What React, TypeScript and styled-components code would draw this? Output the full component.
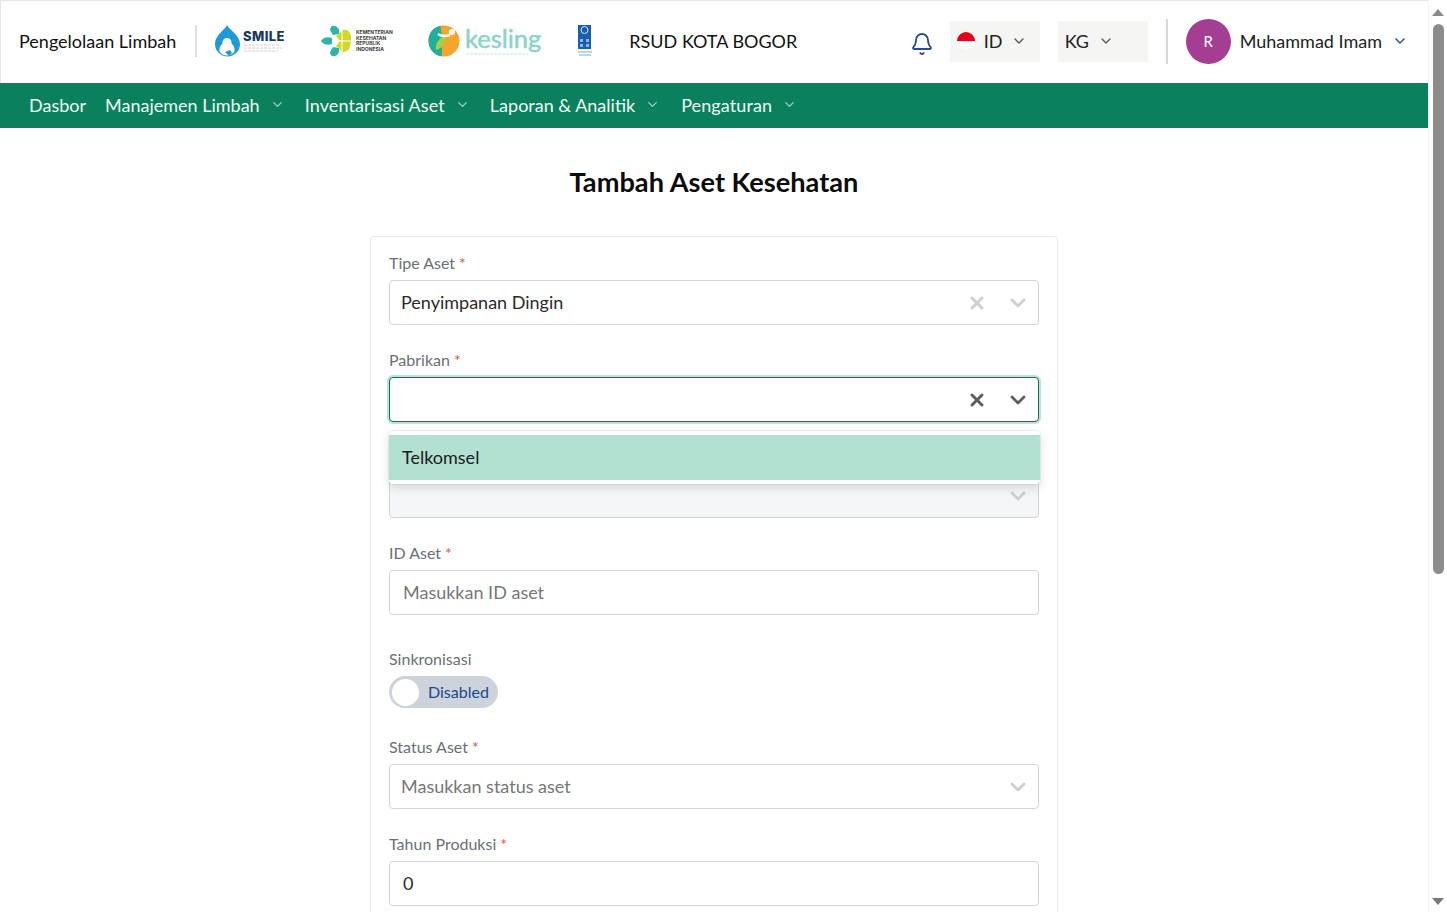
import React from 'react'
import styled, { createGlobalStyle } from 'styled-components'
import { Bell, ChevronDown, X } from 'lucide-react'

const GlobalStyle = createGlobalStyle`
  html, body {
    height: 100%;
    overflow: hidden;
  }
  body {
    margin: 0;
    background: #fff;
    font-family: 'Lato', 'Liberation Sans', sans-serif;
    color: #111;
  }
  * {
    box-sizing: border-box;
  }
`

const Viewport = styled.div`
  display: grid;
  grid-template-columns: 1fr 19px;
  height: 100vh;
`

const PagePane = styled.div`
  min-width: 0;
  overflow: hidden;
`

const ScrollRail = styled.div`
  display: flex;
  flex-direction: column;
  align-items: center;
  padding: 9px 0 7px;
  border-left: 1px solid #f6f6f6;
  background: #fff;
`

const ScrollArrow = styled.span<{ $down?: boolean }>`
  width: 0;
  height: 0;
  margin-top: ${({ $down }) => ($down ? 'auto' : '0')};
  border-left: 6.5px solid transparent;
  border-right: 6.5px solid transparent;
  border-top: ${({ $down }) => ($down ? '7px solid #777' : 'none')};
  border-bottom: ${({ $down }) => ($down ? 'none' : '7px solid #8a8a8a')};
`

const ScrollThumb = styled.span`
  width: 11px;
  height: 550px;
  margin-top: 8px;
  border-radius: 6px;
  background: #8c8c8c;
`

const TopBar = styled.header`
  display: flex;
  align-items: center;
  height: 83px;
  padding: 0 20px 2px 18px;
  border-top: 1px solid #e6e6e6;
  border-left: 1px solid #e6e6e6;
  background: #fff;
`

const AppName = styled.span`
  font-size: 18px;
  white-space: nowrap;
`

const BrandDivider = styled.span`
  width: 2px;
  height: 32px;
  margin: 0 17px 0 19px;
  background: #dedede;
`

const LogoRow = styled.div`
  display: flex;
  align-items: center;
  gap: 35px;
`

const HospitalName = styled.span`
  margin-left: 1px;
  font-size: 18px;
  white-space: nowrap;
`

const TopActions = styled.div`
  display: flex;
  align-items: center;
  margin-left: auto;
`

const BellButton = styled.span`
  display: flex;
  margin: 6px 16px 0 0;
  color: #2c4a8c;
`

const PickerBox = styled.div`
  display: flex;
  align-items: center;
  width: 90px;
  height: 41px;
  margin-right: 18px;
  padding-left: 7px;
  background: #f5f5f3;
  font-size: 18px;
  color: #222;

  svg {
    margin-left: 9px;
  }
`

const FlagDot = styled.span`
  width: 18px;
  height: 18px;
  margin-right: 9px;
  border-radius: 50%;
  background: linear-gradient(#e2001a 50%, #fafafa 50%);
`

const ActionDivider = styled.span`
  width: 2px;
  height: 45px;
  margin-right: 18px;
  background: #d8d8d8;
`

const Avatar = styled.span`
  display: flex;
  align-items: center;
  justify-content: center;
  width: 45px;
  height: 45px;
  margin-right: 9px;
  border-radius: 50%;
  background: #a43e92;
  color: #fff;
  font-size: 15px;
`

const UserName = styled.span`
  margin-right: 10px;
  font-size: 18px;
  color: #222;
  white-space: nowrap;
`

const NavBar = styled.nav`
  display: flex;
  align-items: center;
  height: 45px;
  padding: 0 0 2px 29px;
  background: #0a815c;
`

const NavItem = styled.a<{ $gap?: number; $spread?: number }>`
  display: flex;
  align-items: center;
  margin-right: ${({ $gap }) => $gap ?? 19}px;
  color: #f0fbf7;
  font-size: 18px;
  letter-spacing: ${({ $spread }) => $spread ?? 0}px;
  white-space: nowrap;

  svg {
    margin-left: 10px;
    color: #9ed4c1;
  }
`

const Main = styled.main`
  display: flex;
  flex-direction: column;
  align-items: center;
  padding-top: 36px;
`

const PageTitle = styled.h1`
  margin: 0 0 36px;
  font-size: 27.2px;
  line-height: 36px;
  font-weight: 700;
  color: #0b0b0b;
`

const Card = styled.section`
  width: 688px;
  min-height: 1214px;
  padding: 18px;
  border: 1px solid #e9e9e9;
  border-radius: 4px;
`

const Field = styled.div<{ $gap?: number }>`
  position: relative;
  margin-bottom: ${({ $gap }) => $gap ?? 27}px;
`

const Label = styled.label`
  display: block;
  height: 17px;
  margin-bottom: 8px;
  font-size: 16px;
  line-height: 16px;
  color: #6b7075;
`

const Required = styled.span`
  margin-left: 4px;
  color: #d9534f;
`

const SelectBox = styled.div<{ $focused?: boolean; $disabled?: boolean }>`
  display: flex;
  align-items: center;
  height: 45px;
  padding: 0 8px 0 11px;
  border: 1px solid ${({ $focused }) => ($focused ? '#0f6f55' : '#d4d4d4')};
  border-radius: 4px;
  background: ${({ $disabled }) => ($disabled ? '#f5f6f7' : '#fff')};
  box-shadow: ${({ $focused }) => ($focused ? '0 0 0 2px #b9e6d6' : 'none')};
  font-size: 18px;
`

const SelectValue = styled.span<{ $placeholder?: boolean }>`
  flex: 1;
  padding-bottom: 2px;
  color: ${({ $placeholder }) => ($placeholder ? '#777' : '#2b2b2b')};
`

const IndicatorIcon = styled.span<{ $active?: boolean; $clear?: boolean }>`
  display: flex;
  margin-right: ${({ $clear }) => ($clear ? '19px' : '0')};
  color: ${({ $active }) => ($active ? '#5e5e5e' : '#cfcfcf')};
`

const OptionMenu = styled.div`
  position: absolute;
  top: 79px;
  left: 0;
  right: -1px;
  z-index: 2;
  padding: 4px 0;
  border-radius: 4px;
  background: #fff;
  box-shadow: 0 0 0 1px rgba(0, 0, 0, 0.05), 0 4px 11px rgba(0, 0, 0, 0.13);
`

const Option = styled.div`
  display: flex;
  align-items: center;
  height: 45px;
  padding: 0 0 2px 13px;
  background: #b2e1d1;
  font-size: 18px;
  color: #1c1c1c;
`

const TextInput = styled.div<{ $muted?: boolean }>`
  display: flex;
  align-items: center;
  height: 45px;
  padding: 0 0 2px 13px;
  border: 1px solid #d4d4d4;
  border-radius: 4px;
  font-size: 18px;
  color: ${({ $muted }) => ($muted ? '#777' : '#2b2b2b')};
`

const Toggle = styled.div`
  display: flex;
  align-items: center;
  width: 109px;
  height: 32px;
  padding-left: 3px;
  border-radius: 16px;
  background: #cdd2dc;
`

const ToggleKnob = styled.span`
  width: 27px;
  height: 27px;
  margin-right: 9px;
  border-radius: 50%;
  background: #fff;
`

const ToggleLabel = styled.span`
  padding-bottom: 2px;
  font-size: 16px;
  color: #1b4a86;
`

const SmileLogo = () => (
  <svg width="72" height="32" viewBox="0 0 72 32">
    <path d="M13 0C11 5 1 10 1 19a12.5 12.5 0 0 0 25 0C26 10 15 5 13 0z" fill="#1f9ad6" />
    <path d="M13 13c3 0 5 2.500 4.500 5.500 2.500 2 3.500 5 3 8-2 2.500-4.500 4-7.500 4-3 0-5.500-1.500-7.500-4-.5-3 .5-6 3-8C8 15.500 10 13 13 13z" fill="#fff" />
    <path d="M11 27l5-2 2 3-3 3z" fill="#1f9ad6" />
    <text x="29" y="16" fontFamily="Inter, sans-serif" fontSize="13" fontWeight="800" letterSpacing=".4" fill="#183a5a">SMILE</text>
    <path d="M30 20h36M30 23h38M30 26h34" stroke="#ccd4da" strokeWidth="1" strokeDasharray="3 1" />
  </svg>
)

const KemenkesLogo = () => (
  <svg width="72" height="32" viewBox="0 0 72 32">
    <path d="M11 1c5-1 8 3 7 8l-6 1-3-5c0-2 1-3 2-4z" fill="#2fb5a5" />
    <path d="M11 31c5 1 8-3 7-8l-6-1-3 5c0 2 1 3 2 4z" fill="#2fb5a5" />
    <path d="M0 16c2-3 6-5 11-3v6c-5 2-9 0-11-3z" fill="#2fb5a5" />
    <path d="M15 11l7-6c6-1 9 4 8 11-1 7-2 11-8 11l-7-6 4-5z" fill="#d2d82a" />
    <path d="M14 16h16M21 6v20" stroke="#fff" strokeWidth="1" />
    <text fontFamily="Inter, sans-serif" fontSize="5" fontWeight="700" fill="#3b3b3b">
      <tspan x="35" y="9">KEMENTERIAN</tspan>
      <tspan x="35" y="15">KESEHATAN</tspan>
      <tspan x="35" y="20">REPUBLIK</tspan>
      <tspan x="35" y="26">INDONESIA</tspan>
    </text>
  </svg>
)

const KeslingLogo = () => (
  <svg width="114" height="40" viewBox="0 -4 114 40">
    <circle cx="16" cy="16" r="15.500" fill="#f5a52c" />
    <path d="M13 .8C4 2 .5 9 .5 16c0 8 6 14.500 13 15.300 1-6 0-10 1-15S12 6 13 .8z" fill="#1fae9c" />
    <path d="M8 25c-1-7 3-12 9-14 1 7-2 12-9 14z" fill="#a7cf4a" />
    <circle cx="24" cy="7" r="3" fill="#fff" />
    <path d="M10 9c4 3 9 2 12 1" stroke="#fff" strokeWidth="2.500" fill="none" />
    <text x="37" y="23" fontFamily="Lato, sans-serif" fontSize="25.500" stroke="#8bd4c8" strokeWidth=".5" fill="#8bd4c8">kesling</text>
    <path d="M38 29h62" stroke="#d8efeb" strokeWidth="1.500" strokeDasharray="3 1" />
  </svg>
)

const UndpLogo = () => (
  <svg width="16" height="32" viewBox="0 0 16 32">
    <rect x="1" y="0" width="13" height="24" fill="#1a5fae" />
    <circle cx="7.500" cy="5" r="3.500" fill="none" stroke="#d5e5f5" strokeWidth="1" />
    <path d="M3 14h3v3H3zM9 14h3v3H9zM3 19h3v3H3zM9 19h3v3H9z" fill="#8fb8e0" />
    <path d="M1 27h14M2 30h12" stroke="#a9c6e2" strokeWidth="1.500" />
  </svg>
)

export default function App() {
  return (
    <Viewport>
      <GlobalStyle />
      <PagePane>
        <TopBar>
          <AppName>Pengelolaan Limbah</AppName>
          <BrandDivider />
          <LogoRow>
            <SmileLogo />
            <KemenkesLogo />
            <KeslingLogo />
            <UndpLogo />
            <HospitalName>RSUD KOTA BOGOR</HospitalName>
          </LogoRow>
          <TopActions>
            <BellButton>
              <Bell size={24} strokeWidth={1.8} />
            </BellButton>
            <PickerBox>
              <FlagDot />
              ID
              <ChevronDown size={16} color="#555" />
            </PickerBox>
            <PickerBox>
              KG
              <ChevronDown size={16} color="#555" />
            </PickerBox>
            <ActionDivider />
            <Avatar>R</Avatar>
            <UserName>Muhammad Imam</UserName>
            <ChevronDown size={16} strokeWidth={2.5} color="#3c5a78" />
          </TopActions>
        </TopBar>
        <NavBar>
          <NavItem>Dasbor</NavItem>
          <NavItem $gap={20}>
            Manajemen Limbah
            <ChevronDown size={15} />
          </NavItem>
          <NavItem $gap={20} $spread={0.11}>
            Inventarisasi Aset
            <ChevronDown size={15} />
          </NavItem>
          <NavItem $gap={21}>
            Laporan &amp; Analitik
            <ChevronDown size={15} />
          </NavItem>
          <NavItem $spread={0.1}>
            Pengaturan
            <ChevronDown size={15} />
          </NavItem>
        </NavBar>
        <Main>
          <PageTitle>Tambah Aset Kesehatan</PageTitle>
          <Card>
            <Field>
              <Label>
                Tipe Aset<Required>*</Required>
              </Label>
              <SelectBox>
                <SelectValue>Penyimpanan Dingin</SelectValue>
                <IndicatorIcon $clear>
                  <X size={20} strokeWidth={3.6} />
                </IndicatorIcon>
                <IndicatorIcon>
                  <ChevronDown size={24} strokeWidth={2.8} />
                </IndicatorIcon>
              </SelectBox>
            </Field>
            <Field $gap={26}>
              <Label>
                Pabrikan<Required>*</Required>
              </Label>
              <SelectBox $focused>
                <SelectValue />
                <IndicatorIcon $active $clear>
                  <X size={20} strokeWidth={3.6} />
                </IndicatorIcon>
                <IndicatorIcon $active>
                  <ChevronDown size={24} strokeWidth={2.8} />
                </IndicatorIcon>
              </SelectBox>
              <OptionMenu>
                <Option>Telkomsel</Option>
              </OptionMenu>
            </Field>
            <Field>
              <Label />
              <SelectBox $disabled>
                <SelectValue />
                <IndicatorIcon>
                  <ChevronDown size={24} strokeWidth={2.8} />
                </IndicatorIcon>
              </SelectBox>
            </Field>
            <Field $gap={36}>
              <Label>
                ID Aset<Required>*</Required>
              </Label>
              <TextInput $muted>Masukkan ID aset</TextInput>
            </Field>
            <Field $gap={31}>
              <Label>Sinkronisasi</Label>
              <Toggle>
                <ToggleKnob />
                <ToggleLabel>Disabled</ToggleLabel>
              </Toggle>
            </Field>
            <Field>
              <Label>
                Status Aset<Required>*</Required>
              </Label>
              <SelectBox>
                <SelectValue $placeholder>Masukkan status aset</SelectValue>
                <IndicatorIcon>
                  <ChevronDown size={24} strokeWidth={2.8} />
                </IndicatorIcon>
              </SelectBox>
            </Field>
            <Field>
              <Label>
                Tahun Produksi<Required>*</Required>
              </Label>
              <TextInput>0</TextInput>
            </Field>
          </Card>
        </Main>
      </PagePane>
      <ScrollRail>
        <ScrollArrow />
        <ScrollThumb />
        <ScrollArrow $down />
      </ScrollRail>
    </Viewport>
  )
}
